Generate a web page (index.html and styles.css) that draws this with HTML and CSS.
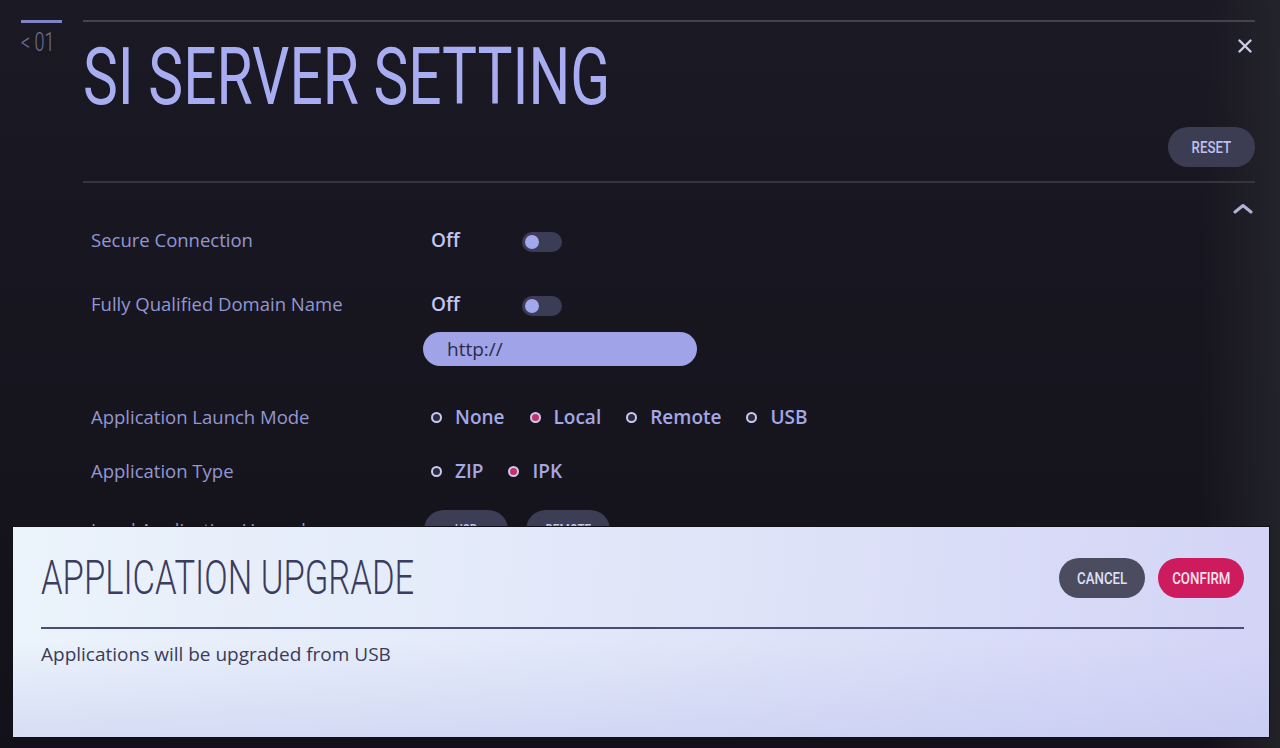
FILE: index.html
```html
<!DOCTYPE html>
<html lang="en">
<head>
    <meta charset="UTF-8">
    <meta name="viewport" content="width=device-width, initial-scale=1.0">
    <title>SI Server Setting</title>
    <link rel="stylesheet" href="styles.css">
</head>
<body>
    <div class="screen">
        <aside class="rail">
            <span class="page-no">&lt; 01</span>
        </aside>

        <main class="panel">
            <header class="panel-head">
                <h1 class="title"><span>SI SERVER SETTING</span></h1>
                <button class="close" aria-label="Close">
                    <svg width="14" height="14" viewBox="0 0 14 14"><path d="M1.5 1.5 L12.5 12.5 M12.5 1.5 L1.5 12.5" stroke="#c9cce6" stroke-width="2.4" stroke-linecap="round" fill="none"/></svg>
                </button>
            </header>

            <div class="toolbar">
                <button class="pill pill-dark"><span>RESET</span></button>
            </div>

            <div class="scroll-up">
                <svg width="20" height="11" viewBox="0 0 20 11"><path d="M2 9 L10 2.5 L18 9" stroke="#aeb2d6" stroke-width="3" stroke-linecap="round" stroke-linejoin="round" fill="none"/></svg>
            </div>

            <div class="settings">
                <div class="row">
                    <div class="label">Secure Connection</div>
                    <div class="value">
                        <div class="line">
                            <span class="state">Off</span>
                            <span class="toggle"></span>
                        </div>
                    </div>
                </div>

                <div class="row">
                    <div class="label">Fully Qualified Domain Name</div>
                    <div class="value">
                        <div class="line">
                            <span class="state">Off</span>
                            <span class="toggle"></span>
                        </div>
                        <div class="field">http://</div>
                    </div>
                </div>

                <div class="row row-radio row-spaced">
                    <div class="label">Application Launch Mode</div>
                    <div class="value">
                        <div class="line radios">
                            <span class="radio"><i></i>None</span>
                            <span class="radio checked"><i></i>Local</span>
                            <span class="radio"><i></i>Remote</span>
                            <span class="radio"><i></i>USB</span>
                        </div>
                    </div>
                </div>

                <div class="row row-radio">
                    <div class="label">Application Type</div>
                    <div class="value">
                        <div class="line radios">
                            <span class="radio"><i></i>ZIP</span>
                            <span class="radio checked"><i></i>IPK</span>
                        </div>
                    </div>
                </div>

                <div class="row">
                    <div class="label">Local Application Upgrade</div>
                    <div class="value">
                        <div class="line buttons">
                            <button class="pill pill-row"><span>USB</span></button>
                            <button class="pill pill-row"><span>REMOTE</span></button>
                        </div>
                    </div>
                </div>
            </div>
        </main>
    </div>

    <div class="dialog">
        <div class="dialog-head">
            <h2 class="dialog-title"><span>APPLICATION UPGRADE</span></h2>
            <div class="dialog-actions">
                <button class="pill pill-cancel"><span>CANCEL</span></button>
                <button class="pill pill-confirm"><span>CONFIRM</span></button>
            </div>
        </div>
        <p class="dialog-text">Applications will be upgraded from USB</p>
    </div>
</body>
</html>
```

FILE: styles.css
```css
body {
    margin: 0;
    width: 1280px;
    height: 748px;
    overflow: hidden;
    position: relative;
    font-family: 'Open Sans', 'DejaVu Sans', sans-serif;
    color: #9a9ede;
    background:
        linear-gradient(90deg, rgba(40, 40, 46, 0) 94%, rgba(40, 40, 46, 0.7) 100%),
        linear-gradient(180deg, #1a1924 0%, #16151e 60%, #121119 100%);
}

button {
    font: inherit;
    border: none;
    padding: 0;
    cursor: pointer;
}

.screen {
    display: grid;
    grid-template-columns: 41px 1fr;
    column-gap: 21px;
    padding: 20px 25px 0 21px;
}

/* left page indicator */
.rail {
    border-top: 3px solid #7f83c4;
    padding-top: 8px;
    height: 40px;
}

.page-no {
    display: inline-block;
    white-space: nowrap;
    font-family: 'Roboto', sans-serif;
    font-weight: 300;
    font-size: 25px;
    line-height: 24px;
    color: #6f7398;
    transform: scaleX(0.72);
    transform-origin: left center;
}

.panel {
    border-top: 2px solid #44444f;
}

.panel-head {
    display: flex;
    justify-content: space-between;
    align-items: flex-start;
}

.title {
    margin: 15px 0 0;
    font-family: 'Roboto', sans-serif;
    font-weight: 400;
    font-size: 80px;
    line-height: 80px;
    color: #a8adf2;
    white-space: nowrap;
}

.title span,
.dialog-title span,
.pill span {
    display: inline-block;
    transform-origin: left center;
}

.title span {
    transform: scaleX(0.733);
}

.close {
    background: none;
    margin: 17px 3px 0 0;
    width: 14px;
    height: 14px;
    display: flex;
}

.toolbar {
    display: flex;
    justify-content: flex-end;
    margin-top: 10px;
    padding-bottom: 14px;
    border-bottom: 2px solid #35353f;
}

/* rounded buttons */
.pill {
    height: 40px;
    width: 87px;
    border-radius: 20px;
    font-family: 'Roboto', sans-serif;
    font-weight: 500;
    font-size: 17px;
    display: flex;
    align-items: center;
    justify-content: center;
}

.pill span {
    transform: scaleX(0.78);
    transform-origin: center;
}

.pill-dark {
    background-color: #3c3d52;
    color: #bcc0f2;
}

.scroll-up {
    display: flex;
    justify-content: flex-end;
    padding: 20px 2px 6px 0;
}

.scroll-up svg {
    display: block;
}

.settings {
    display: flex;
    flex-direction: column;
    gap: 24px;
}

.row {
    display: grid;
    grid-template-columns: 332px 1fr;
    padding-left: 8px;
}

.label {
    font-size: 18.5px;
    line-height: 40px;
    color: #9397d2;
}

.line {
    display: flex;
    align-items: center;
    height: 40px;
    padding-left: 8px;
}

.row-radio .label {
    line-height: 30px;
}

.row-radio .line {
    height: 30px;
}

.row-spaced {
    margin-top: 12px;
}

.state {
    width: 91px;
    font-size: 19px;
    font-weight: 600;
    color: #c3c7f3;
}

.toggle {
    position: relative;
    width: 40px;
    height: 20px;
    margin-top: 4px;
    border-radius: 10px;
    background-color: #3b3c56;
}

.toggle::before {
    content: "";
    position: absolute;
    left: 3px;
    top: 3px;
    width: 14px;
    height: 14px;
    border-radius: 50%;
    background-color: #a3a7ec;
}

.field {
    margin-top: 8px;
    width: 274px;
    height: 34px;
    box-sizing: border-box;
    padding-left: 24px;
    border-radius: 17px;
    background-color: #a0a3e8;
    color: #2b2b47;
    font-size: 19px;
    line-height: 34px;
}

.radios {
    gap: 25px;
}

.radio {
    display: flex;
    align-items: center;
    gap: 13px;
    font-size: 19px;
    font-weight: 600;
    color: #a4a8e4;
}

.radio i {
    width: 7px;
    height: 7px;
    border-radius: 50%;
    border: 2px solid #c8cbee;
    background-color: #2b2b40;
}

.radio.checked i {
    background-color: #c4306c;
}

.buttons {
    padding-left: 1px;
    gap: 18px;
}

.pill-row {
    width: 84px;
    background-color: #3d3e55;
    color: #c0c4ee;
    font-size: 15px;
}

/* confirmation popup over the list */
.dialog {
    position: absolute;
    left: 13px;
    top: 527px;
    width: 1256px;
    height: 210px;
    box-sizing: border-box;
    padding: 31px 25px 0 28px;
    background:
        linear-gradient(180deg, rgba(255, 255, 255, 0) 55%, rgba(190, 196, 238, 0.45) 100%),
        linear-gradient(95deg, #ebf3fb 0%, #e2e8f9 45%, #d3d4f6 100%);
    box-shadow: 0 0 0 1px #101018;
}

.dialog-head {
    display: flex;
    justify-content: space-between;
    align-items: center;
    padding-bottom: 29px;
    border-bottom: 2px solid #4b4c72;
}

.dialog-title {
    margin: 0;
    font-family: 'Roboto', sans-serif;
    font-weight: 300;
    font-size: 48px;
    line-height: 40px;
    color: #3b3c5e;
    white-space: nowrap;
}

.dialog-title span {
    transform: scaleX(0.72);
}

.dialog-actions {
    display: flex;
    gap: 13px;
}

.pill-cancel {
    width: 86px;
    background-color: #4b4c5f;
    color: #dde0f6;
}

.pill-confirm {
    width: 86px;
    background-color: #cd1b5d;
    color: #fbe3ee;
}

.dialog-text {
    margin: 12px 0 0;
    font-size: 19px;
    line-height: 26px;
    color: #3a3b58;
}
```
